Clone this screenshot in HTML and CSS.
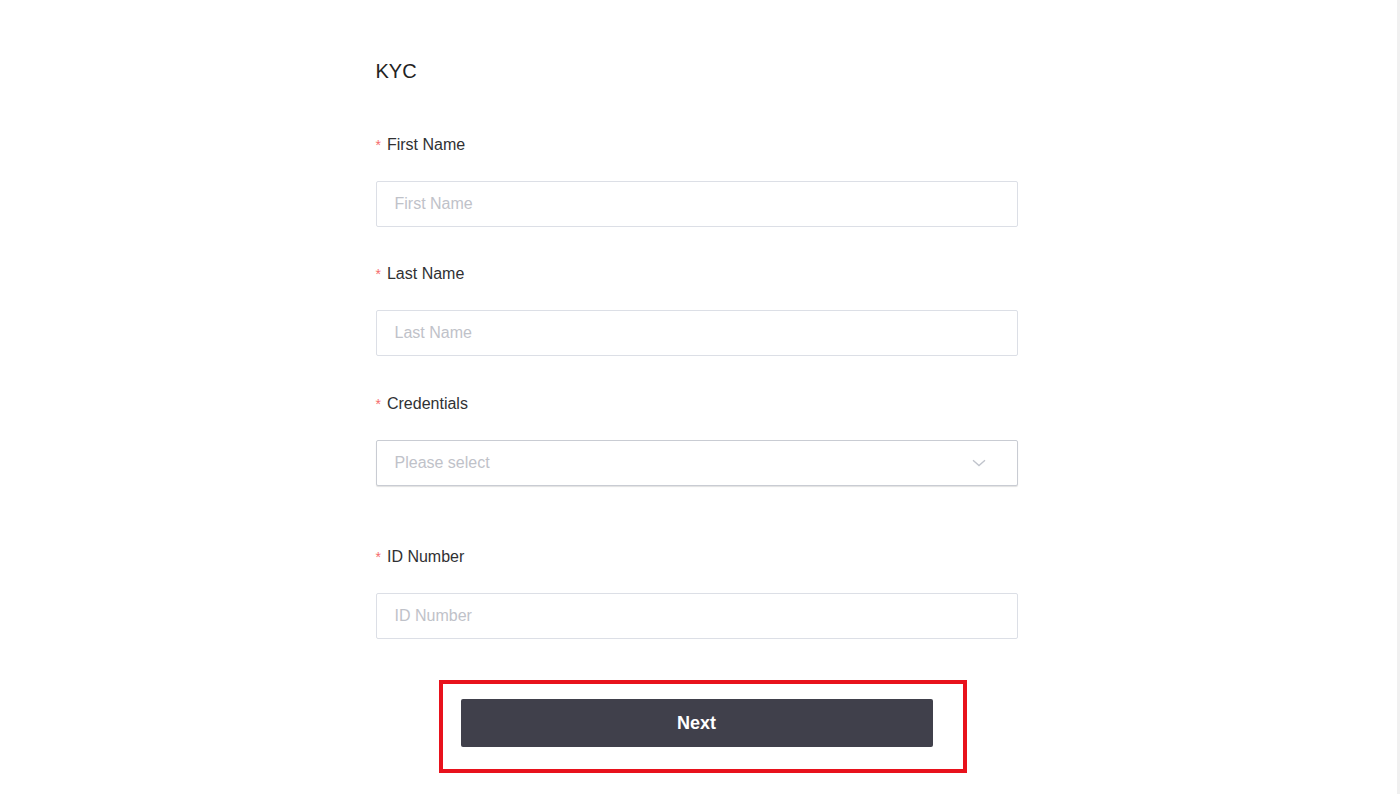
FILE: index.html
```html
<!DOCTYPE html>
<html lang="en">
<head>
<meta charset="utf-8">
<title>KYC</title>
<link rel="stylesheet" href="styles.css">
</head>
<body>
<div class="page">
  <form class="kyc-form">
    <h1 class="title">KYC</h1>

    <div class="form-item">
      <label class="label"><span class="req">*</span>First Name</label>
      <input class="input" type="text" placeholder="First Name">
    </div>

    <div class="form-item">
      <label class="label"><span class="req">*</span>Last Name</label>
      <input class="input" type="text" placeholder="Last Name">
    </div>

    <div class="form-item form-item-select">
      <label class="label"><span class="req">*</span>Credentials</label>
      <div class="select">
        <span class="select-placeholder">Please select</span>
        <svg class="chevron" width="14" height="8" viewBox="0 0 14 8" aria-hidden="true">
          <path d="M1 1.2 L7 6.6 L13 1.2" fill="none" stroke="#c0c4cc" stroke-width="1.3"/>
        </svg>
      </div>
    </div>

    <div class="form-item">
      <label class="label"><span class="req">*</span>ID Number</label>
      <input class="input" type="text" placeholder="ID Number">
    </div>

    <div class="actions">
      <div class="btn-wrap">
        <button class="btn" type="button">Next</button>
        <span class="highlight"></span>
      </div>
    </div>
  </form>
</div>
</body>
</html>
```

FILE: styles.css
```css
* { box-sizing: border-box; }

html, body {
  margin: 0;
  padding: 0;
  background: #ffffff;
}

body {
  font-family: "Liberation Sans", Arial, sans-serif;
  color: #303133;
}

.page {
  display: flex;
  justify-content: center;
  min-height: 794px;
  padding: 57px 4px 0 0;
  border-right: 3px solid #f0f0f0;
}

.kyc-form {
  width: 642px;
  display: flex;
  flex-direction: column;
}

.title {
  margin: 0;
  font-size: 20px;
  line-height: 28px;
  font-weight: normal;
  color: #222222;
}

.form-item {
  display: flex;
  flex-direction: column;
  gap: 25px;
  margin-top: 34px;
}

.title + .form-item {
  margin-top: 47px;
}

.form-item-select {
  margin-top: 35px;
}

.form-item-select + .form-item {
  margin-top: 58px;
}

.label {
  font-size: 16px;
  line-height: 24px;
  padding-top: 1px;
  margin-bottom: -1px;
  color: #303133;
}

.req {
  color: #f56c6c;
  font-size: 14px;
  margin-right: 6px;
  vertical-align: 0;
}

.input {
  height: 46px;
  width: 100%;
  margin: 0;
  padding: 0 18px;
  border: 1px solid #dcdfe6;
  border-radius: 2px;
  font-family: "Liberation Sans", Arial, sans-serif;
  font-size: 16px;
  color: #303133;
  background: #fff;
  outline: none;
}

.input::placeholder {
  color: #bfc2c9;
}

.select {
  height: 46px;
  display: flex;
  align-items: center;
  justify-content: space-between;
  padding: 0 31px 0 18px;
  border: 1px solid #c9ccd3;
  border-radius: 2px;
  box-shadow: 0 1px 1px rgba(0, 0, 0, 0.12);
  background: #fff;
}

.select-placeholder {
  font-size: 16px;
  color: #bfc2c9;
}

.chevron {
  display: block;
}

.actions {
  display: flex;
  justify-content: center;
  margin-top: 60px;
}

.btn-wrap {
  position: relative;
}

.btn {
  display: block;
  width: 472px;
  height: 48px;
  border: none;
  border-radius: 2px;
  background: #40404b;
  color: #ffffff;
  font-family: "Liberation Sans", Arial, sans-serif;
  font-size: 18px;
  font-weight: bold;
  cursor: pointer;
}

.highlight {
  position: absolute;
  left: -22px;
  top: -19px;
  right: -34px;
  bottom: -26px;
  border: 4px solid #e8121c;
  pointer-events: none;
}
```
